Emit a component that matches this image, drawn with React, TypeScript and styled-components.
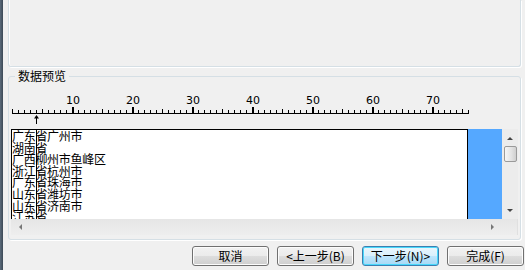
import styled, { createGlobalStyle, css } from "styled-components";

const GlobalStyle = createGlobalStyle`
  html, body {
    margin: 0;
    padding: 0;
    background: #f0f0f0;
  }
  body {
    font-family: "Noto Sans CJK SC", "Liberation Sans", sans-serif;
    font-size: 12px;
    color: #000;
  }
`;

const rows: string[] = [
  "广东省广州市",
  "湖南省",
  "广西柳州市鱼峰区",
  "浙江省杭州市",
  "广东省珠海市",
  "山东省潍坊市",
  "山东省济南市",
  "江苏省",
];

// 눈금자: 한 글자 = 6px
const UNIT = 6;
const UNITS = 76;

function Ruler(): JSX.Element {
  const ticks = [];
  for (let i = 0; i <= UNITS; i++) {
    const x = i * UNIT + 0.5;
    if (i % 10 === 0 && i > 0) {
      ticks.push(<rect key={i} x={x - 0.5} y={25} width={2} height={6} fill="#000" />);
      ticks.push(
        <text key={"t" + i} x={x + 0.5} y={22} fontSize="11" textAnchor="middle" fontFamily="'DejaVu Sans', sans-serif">
          {i}
        </text>
      );
    } else {
      const h = i % 5 === 0 ? 4 : 3;
      ticks.push(<line key={i} x1={x} x2={x} y1={31 - h} y2={31} stroke="#000" strokeWidth={1} />);
    }
  }
  return (
    <RulerSvg width={460} height={47} viewBox="0 0 460 47">
      <line x1={0} x2={UNITS * UNIT + 1} y1={31.5} y2={31.5} stroke="#000" strokeWidth={1} />
      {ticks}
      <line x1={24.5} x2={24.5} y1={34} y2={42} stroke="#000" strokeWidth={1} />
      <path d="M22 36.5 L24.5 33 L27 36.5 Z" fill="#000" />
    </RulerSvg>
  );
}

function App(): JSX.Element {
  return (
    <Window>
      <GlobalStyle />
      <Frame />
      <Content>
        <TopGroup />
        <PreviewGroup>
          <Legend>数据预览</Legend>
          <Ruler />
          <DataRow>
            <Preview>
              {rows.map((r) => (
                <Line key={r}>{r}</Line>
              ))}
              <ColumnMark />
            </Preview>
            <Selection />
            <VScroll>
              <Arrow $dir="up" />
              <Thumb />
              <Spacer />
              <Arrow $dir="down" />
            </VScroll>
          </DataRow>
          <HScroll>
            <Arrow $dir="left" />
            <Spacer />
            <Arrow $dir="right" />
          </HScroll>
        </PreviewGroup>
        <ButtonRow>
          <Button>取消</Button>
          <Button>&lt;上一步(B)</Button>
          <Button $focused>下一步(N)&gt;</Button>
          <Button>完成(F)</Button>
        </ButtonRow>
      </Content>
    </Window>
  );
}

export default App;

const Window = styled.div`
  width: 525px;
  height: 270px;
  display: flex;
  overflow: hidden;
  background: #f0f0f0;
`;

const Frame = styled.div`
  width: 3px;
  background: linear-gradient(90deg, #5b6b7b, #3c4956);
`;

const Content = styled.div`
  flex: 1;
  display: flex;
  flex-direction: column;
  padding: 0 2px 0 5px;
`;

const TopGroup = styled.div`
  height: 66px;
  margin-right: 2px;
  border: 1px solid #d5dfe5;
  border-top: none;
  border-radius: 0 0 3px 3px;
  box-shadow: inset 1px 0 0 #fff, 1px 1px 0 #fff;
`;

const PreviewGroup = styled.fieldset`
  margin: 3px 2px 0 0;
  padding: 0 2px 4px 2px;
  border: 1px solid #d5dfe5;
  border-radius: 3px;
  box-shadow: 1px 1px 0 #fff;
  min-width: 0;
`;

const Legend = styled.legend`
  margin-left: 4px;
  padding: 0 3px;
  font-size: 12px;
  line-height: 12px;
  height: 12px;
`;

const RulerSvg = styled.svg`
  display: block;
  margin-left: 1px;
`;

const DataRow = styled.div`
  display: flex;
  height: 90px;
`;

const Preview = styled.div`
  position: relative;
  width: 455px;
  border: 1px solid #000;
  border-bottom: none;
  background: #fff;
  overflow: hidden;
`;

const Line = styled.div`
  font-size: 12px;
  line-height: 11.6px;
  height: 11.6px;
  letter-spacing: -0.3px;
  white-space: nowrap;
`;

const ColumnMark = styled.div`
  position: absolute;
  left: 24px;
  top: 0;
  bottom: 0;
  width: 1px;
  background: #000;
`;

const Selection = styled.div`
  width: 34px;
  background: #55a8ff;
`;

const VScroll = styled.div`
  width: 16px;
  display: flex;
  flex-direction: column;
  align-items: center;
  background: #ececec;
  padding: 8px 0 7px;
  box-sizing: border-box;
`;

const Spacer = styled.div`
  flex: 1;
`;

const Thumb = styled.div`
  margin-top: 6px;
  width: 13px;
  height: 16px;
  box-sizing: border-box;
  border: 1px solid #9a9a9a;
  border-radius: 2px;
  background: linear-gradient(90deg, #f6f6f6, #e2e2e2 60%, #cfcfcf);
`;

const arrows = {
  up: css`
    border-left: 3px solid transparent;
    border-right: 3px solid transparent;
    border-bottom: 3px solid #444;
  `,
  down: css`
    border-left: 3px solid transparent;
    border-right: 3px solid transparent;
    border-top: 3px solid #444;
  `,
  left: css`
    border-top: 3px solid transparent;
    border-bottom: 3px solid transparent;
    border-right: 3px solid #777;
  `,
  right: css`
    border-top: 3px solid transparent;
    border-bottom: 3px solid transparent;
    border-left: 3px solid #777;
  `,
};

const Arrow = styled.div<{ $dir: keyof typeof arrows }>`
  width: 0;
  height: 0;
  ${(p) => arrows[p.$dir]}
`;

const HScroll = styled.div`
  height: 16px;
  display: flex;
  align-items: center;
  padding: 0 23px 0 8px;
  background: linear-gradient(180deg, #e6e6e6, #eeeeee);
  border-right: 1px solid #e0e0e0;
`;

const ButtonRow = styled.div`
  display: flex;
  justify-content: flex-end;
  gap: 8px;
  margin: 6px -1px 0 0;
`;

const Button = styled.button<{ $focused?: boolean }>`
  width: 77px;
  height: 20px;
  padding: 0;
  font-family: "Noto Sans CJK SC", "Liberation Sans", sans-serif;
  font-size: 12px;
  line-height: 18px;
  color: #000;
  border: 1px solid #707070;
  border-radius: 3px;
  background: linear-gradient(180deg, #f2f2f2 0%, #ebebeb 50%, #dddddd 51%, #cfcfcf 100%);
  box-shadow: inset 0 0 0 1px #fcfcfc;
  ${(p) =>
    p.$focused &&
    css`
      border-color: #3c7fb1;
      background: linear-gradient(180deg, #eaf6fd 0%, #d9f0fc 50%, #bee6fd 51%, #a7d9f5 100%);
      box-shadow: inset 0 0 0 1px #48d8fb;
    `}
`;
